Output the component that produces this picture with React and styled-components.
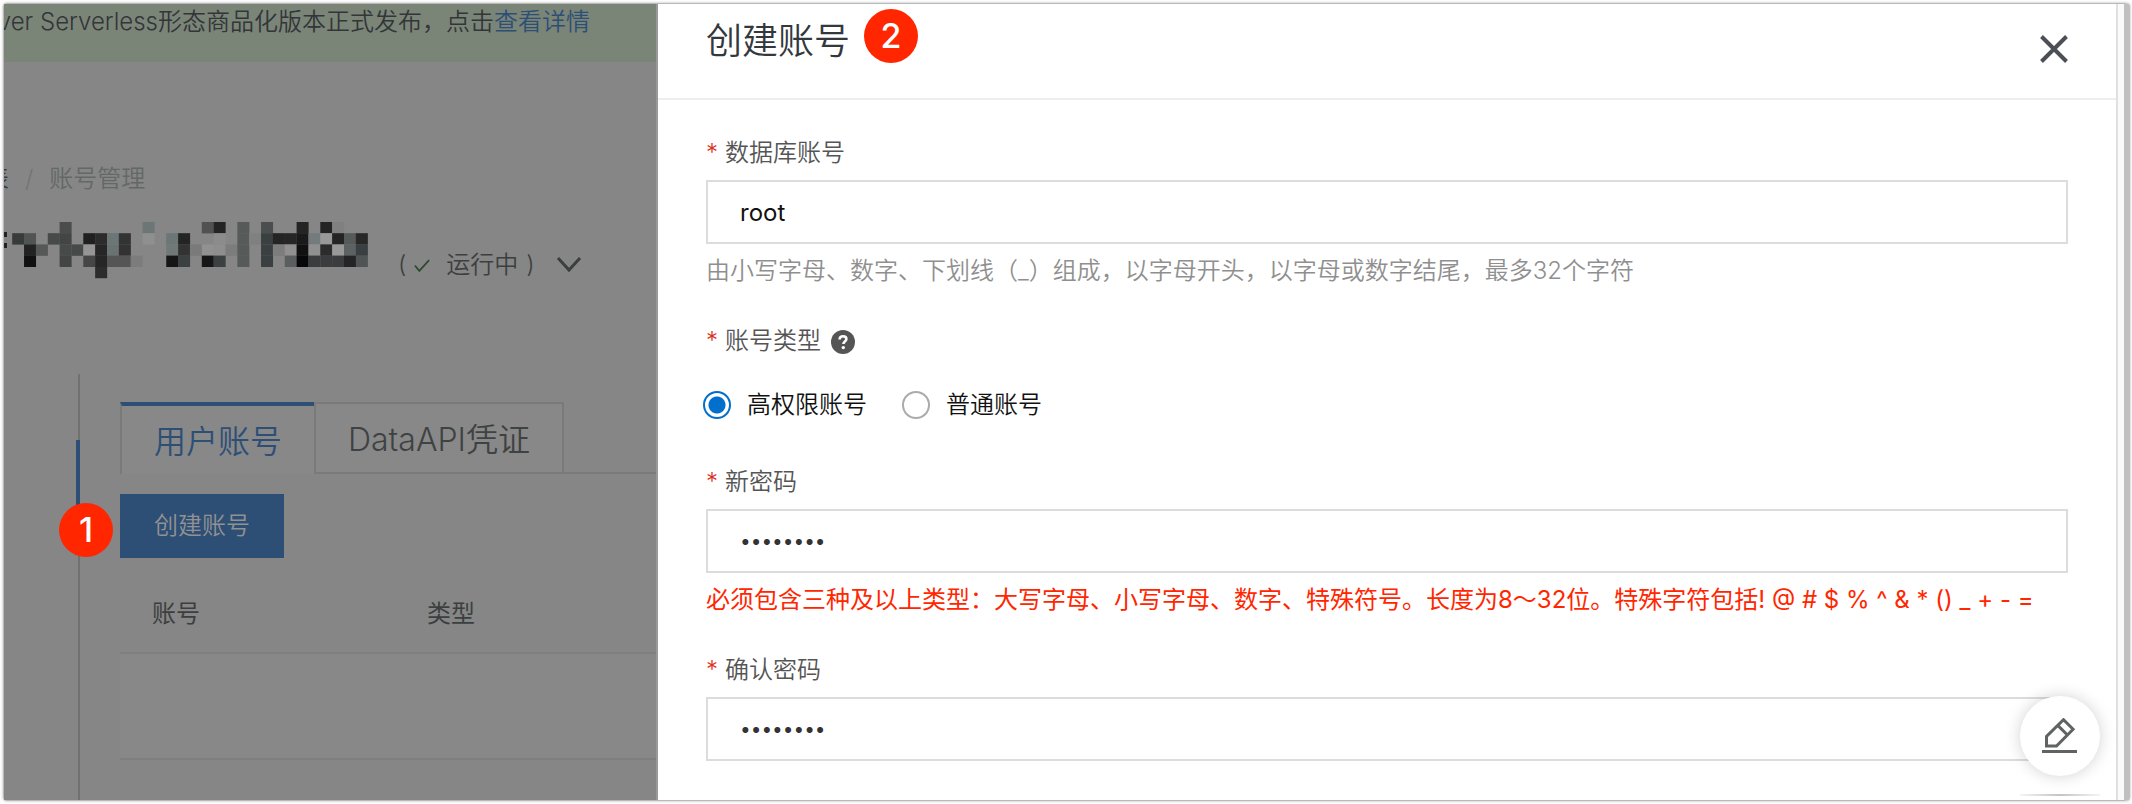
import React, { useState } from 'react';
import styled, { createGlobalStyle } from 'styled-components';

const GlobalStyle = createGlobalStyle`
  * {
    box-sizing: border-box;
  }

  body {
    margin: 0;
    background: #fff;
    font-family: Inter, 'Noto Sans CJK SC', sans-serif;
    font-size: 24px;
    font-weight: 350;
    line-height: 32px;
    color: #333;
  }

  button, input {
    font: inherit;
  }
`;

const Frame = styled.div`
  display: flex;
  min-height: calc(100vh - 6px);
  margin: 3px 2px 3px 3px;
  border: 1px solid #b8b8b8;
  border-right: 6px solid #c0c0c0;
  border-radius: 4px;
  box-shadow: 0 0 3px rgba(0, 0, 0, 0.3);
`;

/* left side: the page behind the drawer, already dimmed */

const Console = styled.main`
  position: relative;
  flex: 0 0 654px;
  overflow: hidden;
  background: #868686;
  border-right: 2px solid #999;
  color: #3c3f3f;
`;

const Notice = styled.div`
  display: flex;
  justify-content: flex-end;
  height: 58px;
  padding: 2px 66px 0 0;
  background: #7a8578;
  color: #333538;
  white-space: nowrap;

  a {
    color: #2d4f76;
    text-decoration: none;
  }
`;

const Breadcrumb = styled.nav`
  display: flex;
  gap: 16px;
  margin: 101px 0 0 -19px;
  color: #636867;
`;

const Crumb = styled.span`
  color: ${props => props.$dark ? '#3c3f3f' : props.$faint ? '#747474' : 'inherit'};
`;

const TitleRow = styled.div`
  display: flex;
  align-items: center;
  height: 60px;
  margin-top: 25px;
`;

const Status = styled.span`
  display: flex;
  align-items: center;
  gap: 8px;
  margin: 30px 0 0 30px;
`;

const StatusText = styled.span`
  margin: 0 0 0 8px;
`;

const IconButton = styled.button`
  display: flex;
  padding: 0;
  border: 0;
  background: none;
  color: inherit;
  cursor: pointer;
`;

const ExpandButton = styled(IconButton)`
  margin-left: 13px;
`;

const Body = styled.div`
  display: flex;
  margin-top: 94px;
`;

const Rail = styled.div`
  width: 42px;
  height: 426px;
  margin-left: 74px;
  border-left: 2px solid #707272;
`;

const RailMark = styled.div`
  width: 4px;
  height: 80px;
  margin: 66px 0 0 -4px;
  background: #2d4f76;
`;

const Content = styled.div`
  flex: 1;
  margin: 28px 0 0;
`;

const Tabs = styled.div`
  display: flex;
  height: 72px;
`;

const Tab = styled.button`
  padding: 4px 32px 0;
  border: 2px solid #7a7a7a;
  border-width: ${props => props.$active ? '4px 0 0 2px' : '2px'};
  border-top-color: ${props => props.$active ? '#2d4f76' : '#7a7a7a'};
  background: #888;
  color: ${props => props.$active ? '#2d4f76' : '#3f4242'};
  font-size: 32px;
  white-space: nowrap;
  cursor: pointer;
`;

const TabFill = styled.div`
  flex: 1;
  border-bottom: 2px solid #7a7a7a;
`;

const CreateButton = styled.button`
  width: 164px;
  height: 64px;
  margin: 20px 0;
  padding: 0;
  border: 0;
  background: #2d4f76;
  color: #929292;
  cursor: pointer;
`;

const Table = styled.table`
  width: 100%;
  border-collapse: collapse;
  table-layout: fixed;

  th {
    height: 75px;
    padding: 0 32px 2px;
    font-weight: 400;
    text-align: left;
    border-bottom: 2px solid #7f7f7f;
  }

  th:first-child {
    width: 275px;
  }

  td {
    height: 106px;
    background: #888;
    border-bottom: 2px solid #7f7f7f;
  }
`;

const Step = styled.span`
  display: flex;
  align-items: center;
  justify-content: center;
  width: 54px;
  height: 54px;
  border-radius: 50%;
  background: #ff2600;
  color: #fff;
  font-size: 34px;
  font-weight: 500;
`;

const PinnedStep = styled(Step)`
  position: absolute;
  top: 499px;
  left: 55px;
`;

/* right side: drawer */

const Drawer = styled.section`
  flex: 1;
  min-width: 0;
  background: #fff;
  border-right: 2px solid #e0e0e0;
`;

const Scrollbar = styled.div`
  width: 6px;
  background: #fafafa;
`;

const DrawerHeader = styled.header`
  display: flex;
  align-items: flex-start;
  height: 96px;
  padding: 5px 48px 0;
  border-bottom: 2px solid #eee;
`;

const DrawerTitle = styled.h2`
  margin: 9px 14px 0 0;
  font-size: 36px;
  font-weight: 350;
  line-height: 46px;
  color: #33383d;
`;

const CloseButton = styled(IconButton)`
  margin: 26px 0 0 auto;
  color: #4b4f56;
`;

const Form = styled.form`
  padding: 37px 48px 0;
`;

const Field = styled.div`
  margin-bottom: 38px;
`;

const Label = styled.label`
  display: flex;
  align-items: center;
  height: 32px;
  margin-bottom: 11px;
  color: #555;

  &::before {
    content: '*';
    width: 19px;
    color: #e02d1b;
  }

  svg {
    margin: 2px 0 0 10px;
  }
`;

const Input = styled.input`
  display: block;
  width: 100%;
  height: 64px;
  padding: 0 32px;
  border: 2px solid #dcdcdc;
  border-radius: 0;
  background: #fff;
  color: #111;
  font-weight: 400;
  outline: 0;

  &[type='password'] {
    color: #333;
    font-size: 19px;
  }
`;

const Hint = styled.p`
  margin: 11px 0 0;
  color: ${props => props.$error ? '#ff2600' : '#8f8f8f'};
  font-weight: ${props => props.$error ? 400 : 350};
`;

const RadioGroup = styled.div`
  display: flex;
  gap: 35px;
  margin: 32px 0 45px -3px;
`;

const RadioLabel = styled.label`
  display: flex;
  align-items: center;
  gap: 16px;
  color: #111;
`;

const Radio = styled.input`
  appearance: none;
  width: 28px;
  height: 28px;
  margin: 0;
  border: 2px solid #aaa;
  border-radius: 50%;

  &:checked {
    border-color: #0070cc;
    background: radial-gradient(circle, #0070cc 8px, #fff 9px);
  }
`;

const EditButton = styled(IconButton)`
  position: absolute;
  right: 32px;
  bottom: 28px;
  align-items: center;
  justify-content: center;
  width: 80px;
  height: 80px;
  border-radius: 50%;
  background: #fff;
  box-shadow: 0 0 16px rgba(0, 0, 0, 0.18);
  color: #5f6463;
`;

const NextButtonEdge = styled.div`
  position: absolute;
  right: 32px;
  bottom: 8px;
  width: 80px;
  height: 2px;
  background: linear-gradient(to right, #f4f4f4, #c4c4c4, #f4f4f4);
`;

// one entry per row of the blurred instance name: [column, grey]
const mosaic = [
  [[4, '#4a4d4c'], [11, '#6b7675'], [16, '#505252'], [17, '#242424'], [19, '#565a59'], [21, '#4a4e4e'], [24, '#242424'], [26, '#242424'], [27, '#808080']],
  [[0, '#383b3b'], [1, '#505452'], [3, '#464a49'], [4, '#424544'], [6, '#202020'], [7, '#2c2c2c'], [8, '#6b7676'], [9, '#333'], [11, '#8f8f8f'], [13, '#6b7676'], [14, '#242424'], [17, '#8c8c8c'], [19, '#565a59'], [20, '#808080'], [21, '#3a4041'], [22, '#242424'], [23, '#262626'], [24, '#1a1a1a'], [25, '#747b7c'], [26, '#999'], [27, '#242424'], [28, '#565a59'], [29, '#282828']],
  [[1, '#222'], [2, '#555857'], [4, '#464a49'], [5, '#464a49'], [6, '#959595'], [7, '#262626'], [8, '#6b7272'], [9, '#333'], [13, '#707878'], [14, '#333'], [15, '#7a7a7a'], [16, '#919191'], [17, '#8e8e8e'], [18, '#7c7c7c'], [19, '#565a59'], [21, '#3a4041'], [22, '#7c7c7c'], [23, '#909090'], [24, '#111'], [25, '#909090'], [26, '#2c2c2c'], [27, '#999'], [28, '#5c6262'], [29, '#3a4041']],
  [[1, '#111'], [4, '#424544'], [6, '#464646'], [7, '#262626'], [8, '#555'], [9, '#555'], [10, '#7c7c7c'], [13, '#161616'], [14, '#3c4040'], [16, '#161616'], [17, '#3c4040'], [19, '#565a59'], [21, '#3a4041'], [23, '#5a5e5e'], [24, '#080808'], [25, '#3a3c3e'], [26, '#3a3c3e'], [27, '#3a3c3e'], [28, '#242424'], [29, '#505454']],
  [[7, '#2c2c2c']],
];

const InstanceName = () => (
  <svg width="364" height="60" viewBox="0 0 364 60" role="img" aria-label="instance">
    <path d="M0 12h3v5H0zM0 23h3v5H0z" fill="#222" />
    {mosaic.map((row, y) => row.map(([x, fill]) => (
      <rect key={`${x}-${y}`} x={8.2 + x * 11.85} y={2 + y * 11.2} width="12" height="11.4" fill={fill} />
    )))}
  </svg>
);

const HelpIcon = () => (
  <svg width="24" height="24" viewBox="0 0 24 24">
    <circle cx="12" cy="12" r="12" fill="#555" />
    <path d="M8.6 9.4c0-2 1.4-3.2 3.4-3.2s3.4 1.1 3.4 2.9c0 2.2-3 2.4-3 4.9" fill="none" stroke="#fff" strokeWidth="2.6" />
    <circle cx="12.3" cy="17.6" r="1.7" fill="#fff" />
  </svg>
);

const App = () => {
  const [account, setAccount] = useState('root');
  const [type, setType] = useState('super');
  const [password, setPassword] = useState('Abc@1234');
  const [confirm, setConfirm] = useState('Abc@1234');

  return (
    <>
      <GlobalStyle />
      <Frame>
        <Console>
          <Notice>
            <span>ver Serverless形态商品化版本正式发布，点击<a href="#detail">查看详情</a></span>
          </Notice>
          <Breadcrumb>
            <Crumb $dark>表</Crumb>
            <Crumb $faint>/</Crumb>
            <Crumb>账号管理</Crumb>
          </Breadcrumb>
          <TitleRow>
            <InstanceName />
            <Status>
              <span>(</span>
              <svg width="16" height="15" viewBox="0 0 18 16" fill="none" stroke="#2f4a2f" strokeWidth="2">
                <path d="M1 8l5 6L17 2" />
              </svg>
              <StatusText>运行中</StatusText>
              <span>)</span>
              <ExpandButton aria-label="expand">
                <svg width="26" height="18" viewBox="0 0 26 18" fill="none" stroke="currentColor" strokeWidth="3">
                  <path d="M2 2l11 12L24 2" />
                </svg>
              </ExpandButton>
            </Status>
          </TitleRow>
          <Body>
            <Rail>
              <RailMark />
            </Rail>
            <Content>
              <Tabs>
                <Tab $active>用户账号</Tab>
                <Tab>DataAPI凭证</Tab>
                <TabFill />
              </Tabs>
              <CreateButton>创建账号</CreateButton>
              <Table>
                <thead>
                  <tr><th>账号</th><th>类型</th></tr>
                </thead>
                <tbody>
                  <tr><td /><td /></tr>
                </tbody>
              </Table>
            </Content>
          </Body>
          <PinnedStep>1</PinnedStep>
        </Console>

        <Drawer>
          <DrawerHeader>
            <DrawerTitle>创建账号</DrawerTitle>
            <Step>2</Step>
            <CloseButton aria-label="close">
              <svg width="28" height="28" viewBox="0 0 28 28" fill="none" stroke="currentColor" strokeWidth="4">
                <path d="M1.5 1.5l25 25M26.5 1.5l-25 25" />
              </svg>
            </CloseButton>
          </DrawerHeader>
          <Form>
            <Field>
              <Label htmlFor="account">数据库账号</Label>
              <Input id="account" value={account} onChange={e => setAccount(e.target.value)} />
              <Hint>由小写字母、数字、下划线（_）组成，以字母开头，以字母或数字结尾，最多32个字符</Hint>
            </Field>
            <Label as="div">账号类型<HelpIcon /></Label>
            <RadioGroup role="radiogroup" aria-label="账号类型">
              <RadioLabel>
                <Radio type="radio" name="type" checked={type === 'super'} onChange={() => setType('super')} />
                高权限账号
              </RadioLabel>
              <RadioLabel>
                <Radio type="radio" name="type" checked={type === 'normal'} onChange={() => setType('normal')} />
                普通账号
              </RadioLabel>
            </RadioGroup>
            <Field>
              <Label htmlFor="password">新密码</Label>
              <Input id="password" type="password" value={password} onChange={e => setPassword(e.target.value)} />
              <Hint $error>必须包含三种及以上类型：大写字母、小写字母、数字、特殊符号。长度为8～32位。特殊字符包括! @ # $ % ^ &amp; * () _ + - =</Hint>
            </Field>
            <Label htmlFor="confirm">确认密码</Label>
            <Input id="confirm" type="password" value={confirm} onChange={e => setConfirm(e.target.value)} />
          </Form>
        </Drawer>
        <Scrollbar />
      </Frame>
      <EditButton aria-label="feedback">
        <svg width="36" height="36" viewBox="0 0 36 36" fill="none" stroke="currentColor" strokeWidth="3">
          <path d="M4.5 28v-9.5L21.5 1.7l9.6 9.6L14.5 28z" />
          <path d="M15.8 7.4l9.6 9.6" />
          <path d="M0 33.5h35" />
        </svg>
      </EditButton>
      <NextButtonEdge />
    </>
  );
};

export default App;
